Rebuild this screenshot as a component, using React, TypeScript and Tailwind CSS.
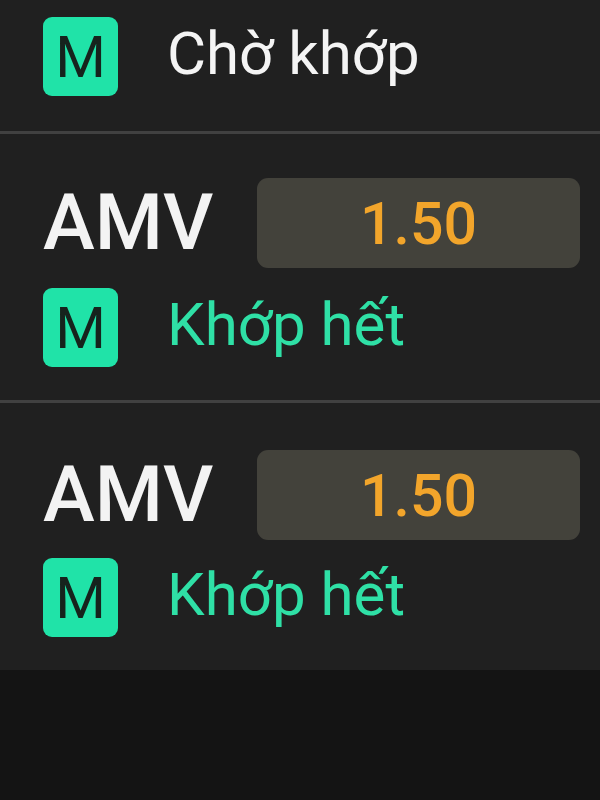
import React from "react";

function Badge() {
  return (
    <div className="flex h-[79px] w-[75px] shrink-0 items-center justify-center rounded-[9px] bg-[#20e3a8]">
      <span className="text-[58px] leading-none text-[#16231d]">M</span>
    </div>
  );
}

function StatusLine({ text, green }: { text: string; green?: boolean }) {
  return (
    <div className="flex items-center gap-[49px] pl-[43px]">
      <Badge />
      <span
        className={
          "-translate-y-[3px] text-[60px] leading-none " +
          (green ? "text-[#2fe0a6]" : "text-[#f4f4f4]")
        }
      >
        {text}
      </span>
    </div>
  );
}

function OrderRow({ pt, gap }: { pt: string; gap: string }) {
  return (
    <div className={"flex flex-col border-t-[3px] border-[#414141] pb-[33px] " + pt + " " + gap}>
      <div className="flex items-center pl-[43px] pr-[20px]">
        <span className="w-[214px] text-[78px] font-medium leading-none text-[#f3f3f3]">AMV</span>
        <div className="flex h-[90px] flex-1 items-center justify-center rounded-[11px] bg-[#43423b]">
          <span className="text-[59px] font-medium leading-none text-[#f2a52b]">1.50</span>
        </div>
      </div>
      <StatusLine text="Khớp hết" green />
    </div>
  );
}

export default function App() {
  return (
    <div
      className="flex h-[800px] w-[600px] flex-col bg-[#141414]"
      style={{ fontFamily: "Roboto, 'Noto Sans', sans-serif" }}
    >
      <div className="bg-[#202020]">
        <div className="pb-[35px] pt-[17px]">
          <StatusLine text="Chờ khớp" />
        </div>
        <OrderRow pt="pt-[44px]" gap="gap-[20px]" />
        <OrderRow pt="pt-[47px]" gap="gap-[18px]" />
      </div>
    </div>
  );
}
